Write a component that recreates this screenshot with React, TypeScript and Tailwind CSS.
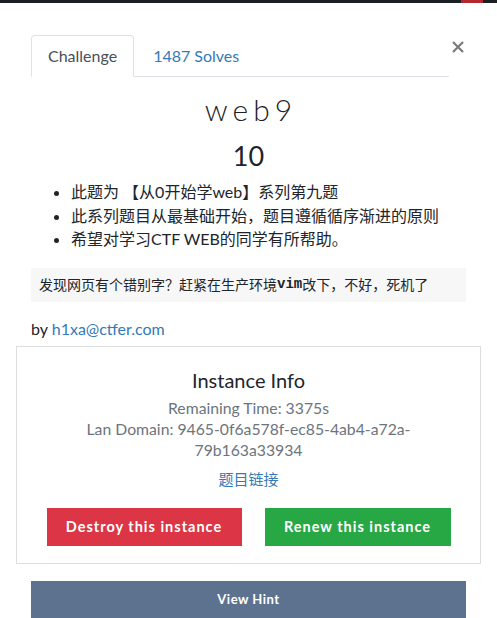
import React from "react";

export default function App() {
  return (
    <div className="w-[497px] h-[618px] overflow-hidden bg-white text-[#212529] font-[family-name:Lato,'Noto_Sans_CJK_SC',sans-serif]">
      {/* dark navbar remnant */}
      <div className="h-[3px] bg-[#1c1f23] relative">
        <div className="absolute right-[14px] top-0 w-[22px] h-[3px] bg-[#b3272f]" />
      </div>

      {/* header with tabs */}
      <div className="flex items-start pl-[31px] pr-[32px] pt-[32px]">
        <div className="flex-1 flex border-b border-[#dee2e6] text-[16px]">
          <div className="h-[42px] -mb-px px-[16px] flex items-center border border-[#dee2e6] border-b-white rounded-t-[4px] text-[#495057] bg-white">
            Challenge
          </div>
          <div className="h-[41px] px-[19px] flex items-center text-[#337ab7]">1487 Solves</div>
        </div>
        <button className="ml-[2px] mt-[5px] w-[14px] h-[14px] flex items-center justify-center text-[#7a7a7a]">
          <svg width="12" height="12" viewBox="0 0 12 12" fill="none" stroke="currentColor" strokeWidth="2.2">
            <path d="M1 1L11 11M11 1L1 11" />
          </svg>
        </button>
      </div>

      {/* title */}
      <div className="px-[31px] text-center">
        <div className="mt-[14px] text-[30px] leading-[36px] font-light tracking-[5px] text-[#1f1f1f] pl-[5px]">web9</div>
        <div className="mt-[11px] text-[27px] leading-[36px] text-[#212529]">10</div>
      </div>

      {/* description */}
      <ul className="mt-[6px] pl-[71px] pr-[31px] list-disc text-[16px] leading-[23.5px] text-[#212529]">
        <li>此题为 【从0开始学web】系列第九题</li>
        <li>此系列题目从最基础开始，题目遵循循序渐进的原则</li>
        <li>希望对学习CTF WEB的同学有所帮助。</li>
      </ul>

      <div className="mx-[31px] mt-[17px] h-[34px] bg-[#f7f7f7] px-[8px] flex items-center text-[14px] text-[#212529] font-[family-name:'Noto_Sans_CJK_SC',sans-serif] whitespace-pre">
        发现网页有个错别字？赶紧在生产环境<span className="font-[family-name:'Liberation_Mono',monospace] font-bold text-[14px]">vim</span>改下，不好，死机了
      </div>

      <div className="mx-[31px] mt-[16px] text-[16px] leading-[22px]">
        by <span className="text-[#337ab7]">h1xa@ctfer.com</span>
      </div>

      {/* instance card */}
      <div className="mx-[16px] mt-[6px] border border-[#dddddd] h-[218px] flex flex-col items-center">
        <div className="mt-[20px] text-[20px] leading-[26px] text-[#212529]">Instance Info</div>
        <div className="mt-[4px] text-[15.75px] leading-[21px] text-[#6c757d] text-center w-[345px]">
          <div>Remaining Time: 3375s</div>
          <div>Lan Domain: 9465-0f6a578f-ec85-4ab4-a72a-79b163a33934</div>
        </div>
        <div className="mt-[9px] text-[15px] leading-[20px] text-[#337ab7]">题目链接</div>
        <div className="mt-[19px] flex gap-[23px]">
          <button className="h-[38px] w-[195px] bg-[#dc3545] text-white font-bold text-[14.5px] tracking-[1px]">
            Destroy this instance
          </button>
          <button className="h-[38px] w-[186px] bg-[#28a745] text-white font-bold text-[14.5px] tracking-[1px]">
            Renew this instance
          </button>
        </div>
      </div>

      <div className="mx-[31px] mt-[17px] h-[40px] bg-[#5c728f] flex items-center justify-center text-white font-bold text-[13px] tracking-[0.5px] pb-[1px]">
        View Hint
      </div>
    </div>
  );
}
